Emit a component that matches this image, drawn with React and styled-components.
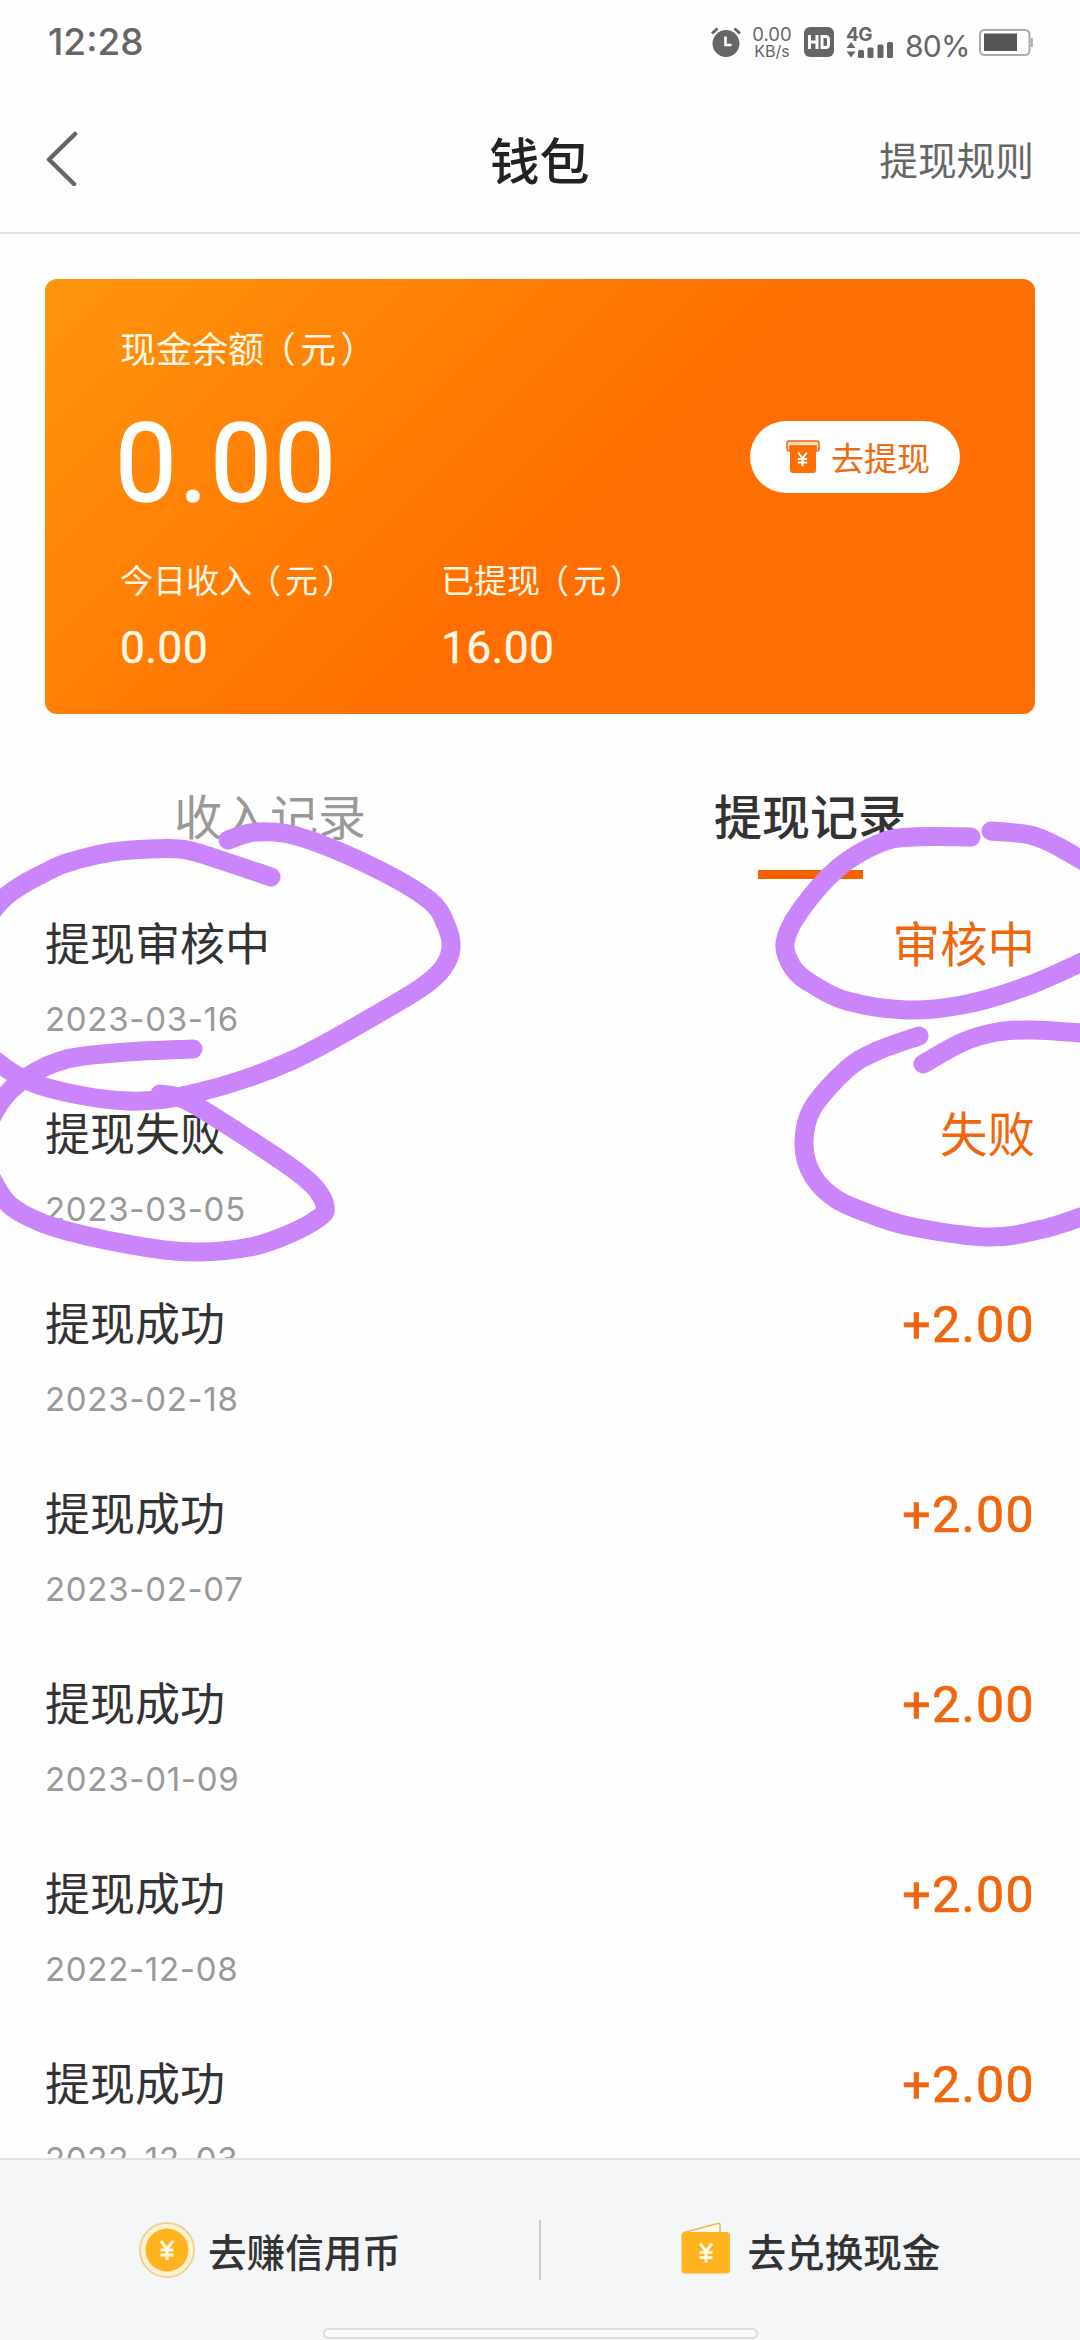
import React from 'react'
import styled, { createGlobalStyle } from 'styled-components'

const GlobalStyle = createGlobalStyle`
  * {
    box-sizing: border-box;
  }

  body {
    margin: 0;
    background: #ffffff;
    font-family: 'Noto Sans CJK SC', sans-serif;
    color: #333333;
  }
`

const Screen = styled.div`
  position: relative;
  display: flex;
  flex-direction: column;
  width: 1080px;
  height: 2340px;
  overflow: hidden;
  background: #fefefe;
`

/* status bar */

const StatusBar = styled.div`
  display: flex;
  justify-content: space-between;
  align-items: center;
  height: 84px;
  padding: 0 47px 0 48px;
  color: #666666;
  font-family: Inter, sans-serif;
`

const Clock = styled.span`
  font-size: 37px;
  font-weight: 500;
  line-height: 84px;
`

const StatusIcons = styled.div`
  display: flex;
  align-items: center;
  height: 84px;
`

const Speed = styled.div`
  display: flex;
  flex-direction: column;
  align-items: center;
  width: 42px;
  margin: 0 11px 0 10px;
  font-size: 18.5px;
  line-height: 18px;
  white-space: nowrap;
`

const SpeedUnit = styled.span`
  font-size: 16px;
  line-height: 16px;
`

const Signal = styled.div`
  display: flex;
  flex-direction: column;
  width: 48px;
  height: 31px;
  margin: 0 11px 0 12px;
`

const Network = styled.span`
  font-size: 19px;
  font-weight: 700;
  line-height: 15px;
  letter-spacing: -0.5px;
`

const Percent = styled.span`
  width: 74px;
  padding-top: 7px;
  font-size: 30px;
  line-height: 36px;
  letter-spacing: -0.8px;
`

/* header */

const Header = styled.header`
  display: grid;
  grid-template-columns: 1fr auto 1fr;
  align-items: center;
  height: 150px;
  padding: 0 46px 0 45px;
  border-bottom: 2px solid #e2e2e2;
`

const Title = styled.h1`
  margin: 0;
  color: #222222;
  font-size: 50px;
  font-weight: 500;
  line-height: 148px;
`

const RulesLink = styled.span`
  justify-self: end;
  color: #666666;
  font-size: 38.7px;
  line-height: 146px;
`

/* balance card */

const Card = styled.section`
  display: flex;
  justify-content: space-between;
  height: 435px;
  margin: 45px 45px 0;
  padding: 44px 75px 0;
  border-radius: 12px;
  background: linear-gradient(135deg, #ff950c 0%, #ff6e00 55%);
  color: #fff8e6;
`

const CardLabel = styled.div`
  font-size: ${p => p.$size}px;
  line-height: 48px;
  white-space: nowrap;
`

const Paren = styled.span`
  display: inline-block;
  width: 1em;
  text-indent: ${p => p.$shift}em;
`

const Balance = styled.div`
  margin: 28px 0 26px -5px;
  color: #ffffff;
  font-family: Roboto, sans-serif;
  font-size: 110px;
  line-height: 130px;
  letter-spacing: 2.2px;
  -webkit-text-stroke: 1.4px #ffffff;
`

const Stats = styled.div`
  display: flex;
`

const Stat = styled.div`
  width: 321px;
`

const StatValue = styled.div`
  margin-top: 20px;
  font-family: Roboto, sans-serif;
  font-size: 44.5px;
  line-height: 50px;
  letter-spacing: 0.3px;
  -webkit-text-stroke: 0.4px #fff8e6;
`

const WithdrawButton = styled.button`
  display: flex;
  flex-shrink: 0;
  align-items: center;
  gap: 11px;
  width: 210px;
  height: 72px;
  margin: 98px 0 0 -12px;
  padding: 0 0 0 36px;
  border: 0;
  border-radius: 36px;
  background: #ffffff;
  color: #ee6a10;
  font: 33px 'Noto Sans CJK SC', sans-serif;
  line-height: 72px;
  white-space: nowrap;
`

/* records */

const Tabs = styled.nav`
  display: flex;
  height: 181px;
  padding-top: 67px;
`

const Tab = styled.div`
  display: flex;
  flex: 1;
  flex-direction: column;
  align-items: center;
  color: ${p => (p.$active ? '#333333' : '#999999')};
  font-size: 48px;
  font-weight: ${p => (p.$active ? 500 : 400)};
  line-height: 66px;
`

const Underline = styled.div`
  width: 105px;
  height: 9px;
  margin-top: 23px;
  background: #fa6000;
`

const List = styled.ul`
  flex: 1;
  min-height: 0;
  margin: 0;
  padding: 0 45px;
  overflow: hidden;
  list-style: none;
`

const Record = styled.li`
  display: flex;
  justify-content: space-between;
  height: 190px;
  padding-top: 14px;
`

const RecordTitle = styled.div`
  font-size: 45px;
  line-height: 66px;
`

const RecordDate = styled.div`
  margin-top: 24px;
  color: #999999;
  font-family: Inter, sans-serif;
  font-size: 33px;
  line-height: 40px;
  letter-spacing: 0.7px;
`

const RecordStatus = styled.div`
  color: #f0660c;
  font-size: 47.5px;
  line-height: 66px;
`

const Amount = styled(RecordStatus)`
  font-family: Roboto, sans-serif;
  font-size: 50px;
  line-height: 72px;
  letter-spacing: 1.4px;
  -webkit-text-stroke: 0.7px #f0660c;
`

/* footer */

const Footer = styled.footer`
  display: flex;
  flex-direction: column;
  align-items: center;
  height: 182px;
  border-top: 2px solid #e2e3e4;
  background: #f4f6f7;
`

const Actions = styled.div`
  display: flex;
  align-items: center;
  width: 100%;
  height: 168px;
  padding-top: 12px;
`

const Action = styled.div`
  display: flex;
  flex: 1;
  justify-content: center;
  align-items: center;
  gap: ${p => p.$gap}px;
  font-size: 38.6px;
  font-weight: 500;
  line-height: 60px;
`

const Divider = styled.div`
  width: 2px;
  height: 60px;
  background: #c8cacb;
`

const HomeBar = styled.div`
  width: 435px;
  height: 11px;
  border: 2px solid #dcdddd;
  border-radius: 6px;
  background: #fafbfb;
`

const Marks = styled.svg`
  position: absolute;
  top: 0;
  left: 0;
  pointer-events: none;
`

const records = [
  { title: '提现审核中', date: '2023-03-16', status: '审核中' },
  { title: '提现失败', date: '2023-03-05', status: '失败' },
  { title: '提现成功', date: '2023-02-18', amount: '+2.00' },
  { title: '提现成功', date: '2023-02-07', amount: '+2.00' },
  { title: '提现成功', date: '2023-01-09', amount: '+2.00' },
  { title: '提现成功', date: '2022-12-08', amount: '+2.00' },
  { title: '提现成功', date: '2022-12-03', amount: '+2.00' },
]

// pen strokes as sampled points
const strokes = [
  [[271, 877], [202, 854], [180, 849], [150, 849], [112, 852], [80, 859], [50, 870], [0, 902], [-32, 960], [-30, 1030], [0, 1064], [45, 1087], [127, 1101], [200, 1092], [293, 1060], [393, 1005], [425, 985], [443, 968], [451, 948], [446, 925], [429, 900], [373, 867], [300, 837], [257, 832], [228, 840]],
  [[193, 1049], [127, 1052], [67, 1059], [27, 1077], [0, 1103], [-18, 1148], [0, 1193], [23, 1214], [67, 1231], [150, 1248], [200, 1252], [250, 1247], [287, 1235], [320, 1217], [325, 1206], [317, 1190], [300, 1174], [267, 1151], [200, 1108], [178, 1097], [160, 1094]],
  [[971, 837], [913, 837], [880, 843], [838, 868], [800, 911], [785, 943], [793, 968], [812, 984], [847, 1001], [907, 1010], [967, 1004], [1030, 985], [1095, 956]],
  [[991, 831], [1030, 835], [1057, 846], [1095, 868]],
  [[919, 1036], [877, 1051], [847, 1069], [812, 1109], [804, 1145], [813, 1176], [836, 1199], [870, 1214], [913, 1227], [990, 1237], [1047, 1228], [1095, 1212]],
  [[923, 1064], [963, 1042], [997, 1032], [1033, 1030], [1095, 1034]],
]

const smooth = pts =>
  pts.slice(1).reduce((d, p, i) => {
    const a = pts[i - 1] || pts[i]
    const b = pts[i]
    const c = pts[i + 2] || p
    const c1 = [b[0] + (p[0] - a[0]) / 6, b[1] + (p[1] - a[1]) / 6]
    const c2 = [p[0] - (c[0] - b[0]) / 6, p[1] - (c[1] - b[1]) / 6]
    return `${d} C${c1} ${c2} ${p}`
  }, `M${pts[0]}`)

const AlarmIcon = () => (
  <svg width="30" height="30" viewBox="0 0 30 30">
    <circle cx="15" cy="16.5" r="13.5" fill="#666" />
    <path d="M1 6.5 L6.5 1.5 M29 6.5 L23.5 1.5" stroke="#666" strokeWidth="3" />
    <path d="M14.5 9.5 V18 H20.5" fill="none" stroke="#fff" strokeWidth="2.6" />
  </svg>
)

const HdIcon = () => (
  <svg width="30" height="30" viewBox="0 0 30 30">
    <rect width="30" height="30" rx="6" fill="#666" />
    <path d="M5.5 8 V22 M13 8 V22 M5.5 15 H13 M18 9.5 H21.5 Q24.5 9.5 24.5 12.5 V17.5 Q24.5 20.5 21.5 20.5 H18 Z" fill="none" stroke="#fff" strokeWidth="3" />
  </svg>
)

const SignalBars = () => (
  <svg width="48" height="16" viewBox="0 0 48 16">
    <path d="M0.5 6 L5 0 L9.5 6 Z M0.5 9.5 H9.5 L5 15.5 Z" fill="#666" />
    <rect x="12" y="8" width="6" height="8" rx="1.5" fill="#666" />
    <rect x="21.5" y="5.5" width="6" height="10.5" rx="1.5" fill="#666" />
    <rect x="31.5" y="2.5" width="6" height="13.5" rx="1.5" fill="#666" />
    <rect x="41" y="0" width="6" height="16" rx="1.5" fill="#666" />
  </svg>
)

const BatteryIcon = () => (
  <svg width="54" height="27" viewBox="0 0 54 27">
    <rect x="1" y="1" width="49.5" height="25" rx="4.5" fill="none" stroke="#aaa" strokeWidth="2" />
    <rect x="5" y="4.5" width="33" height="17.5" fill="#555" />
    <path d="M52.8 9 V18" stroke="#aaa" strokeWidth="2" />
  </svg>
)

const BackIcon = () => (
  <svg width="34" height="56" viewBox="0 0 34 56">
    <path d="M30 4 L4 29.5 L29 54" fill="none" stroke="#666" strokeWidth="4.5" strokeLinecap="round" strokeLinejoin="round" />
  </svg>
)

const yen = 'M-6 -9 L0 -1 L6 -9 M0 -1 V10 M-6.5 0 H6.5 M-6.5 5 H6.5'

const CashIcon = () => (
  <svg width="34" height="34" viewBox="0 0 34 34">
    <path d="M4 5 H30 V30 Q30 33 27 33 H7 Q4 33 4 30 Z" fill="#ff6e00" />
    <path d="M4 11 H3 Q1 11 1 9 V3 Q1 1 3 1 H31 Q33 1 33 3 V9 Q33 11 31 11 H30 V6 H4 Z" fill="#ffd9b0" stroke="#e8691a" strokeWidth="1.5" />
    <path d={yen} transform="translate(16.5 19) scale(0.72)" fill="none" stroke="#fff" strokeWidth="2.8" />
  </svg>
)

const CoinIcon = () => (
  <svg width="58" height="58" viewBox="0 0 58 58">
    <circle cx="29" cy="29" r="27" fill="#fff3d3" stroke="#f0d299" strokeWidth="2" />
    <circle cx="29" cy="29" r="21.5" fill="#ffb31f" />
    <path d={yen} transform="translate(29 29)" fill="none" stroke="#fff8e0" strokeWidth="3" />
  </svg>
)

const WalletIcon = () => (
  <svg width="50" height="56" viewBox="0 0 50 56">
    <path d="M3 10.5 L37 1.5 Q39 1 39 3 V11" fill="#fffaf0" stroke="#efb550" strokeWidth="1.6" />
    <rect x="0.5" y="10" width="48.5" height="41.5" rx="3.5" fill="#ffb31f" />
    <path d={yen} transform="translate(25 30.5)" fill="none" stroke="#fff8e0" strokeWidth="3" />
  </svg>
)

const Yuan = () => (
  <>
    <Paren $shift={-0.12}>（</Paren>元<Paren $shift={0.12}>）</Paren>
  </>
)

const App = () => (
  <>
    <GlobalStyle />
    <Screen>
      <StatusBar>
        <Clock>12:28</Clock>
        <StatusIcons>
          <AlarmIcon />
          <Speed>
            0.00
            <SpeedUnit>KB/s</SpeedUnit>
          </Speed>
          <HdIcon />
          <Signal>
            <Network>4G</Network>
            <SignalBars />
          </Signal>
          <Percent>80%</Percent>
          <BatteryIcon />
        </StatusIcons>
      </StatusBar>

      <Header>
        <BackIcon />
        <Title>钱包</Title>
        <RulesLink>提现规则</RulesLink>
      </Header>

      <Card>
        <div>
          <CardLabel $size={36}>现金余额<Yuan /></CardLabel>
          <Balance>0.00</Balance>
          <Stats>
            <Stat>
              <CardLabel $size={33}>今日收入<Yuan /></CardLabel>
              <StatValue>0.00</StatValue>
            </Stat>
            <Stat>
              <CardLabel $size={33}>已提现<Yuan /></CardLabel>
              <StatValue>16.00</StatValue>
            </Stat>
          </Stats>
        </div>
        <WithdrawButton>
          <CashIcon />
          去提现
        </WithdrawButton>
      </Card>

      <Tabs>
        <Tab>收入记录</Tab>
        <Tab $active>
          提现记录
          <Underline />
        </Tab>
      </Tabs>

      <List>
        {records.map(r => (
          <Record key={r.date}>
            <div>
              <RecordTitle>{r.title}</RecordTitle>
              <RecordDate>{r.date}</RecordDate>
            </div>
            {r.amount ? <Amount>{r.amount}</Amount> : <RecordStatus>{r.status}</RecordStatus>}
          </Record>
        ))}
      </List>

      <Footer>
        <Actions>
          <Action $gap={12}>
            <CoinIcon />
            去赚信用币
          </Action>
          <Divider />
          <Action $gap={17}>
            <WalletIcon />
            去兑换现金
          </Action>
        </Actions>
        <HomeBar />
      </Footer>

      <Marks width="1080" height="2340" viewBox="0 0 1080 2340">
        {strokes.map((pts, i) => (
          <path key={i} d={smooth(pts)} fill="none" stroke="#cb85fb" strokeWidth="19" strokeLinecap="round" strokeLinejoin="round" />
        ))}
      </Marks>
    </Screen>
  </>
)

export default App
